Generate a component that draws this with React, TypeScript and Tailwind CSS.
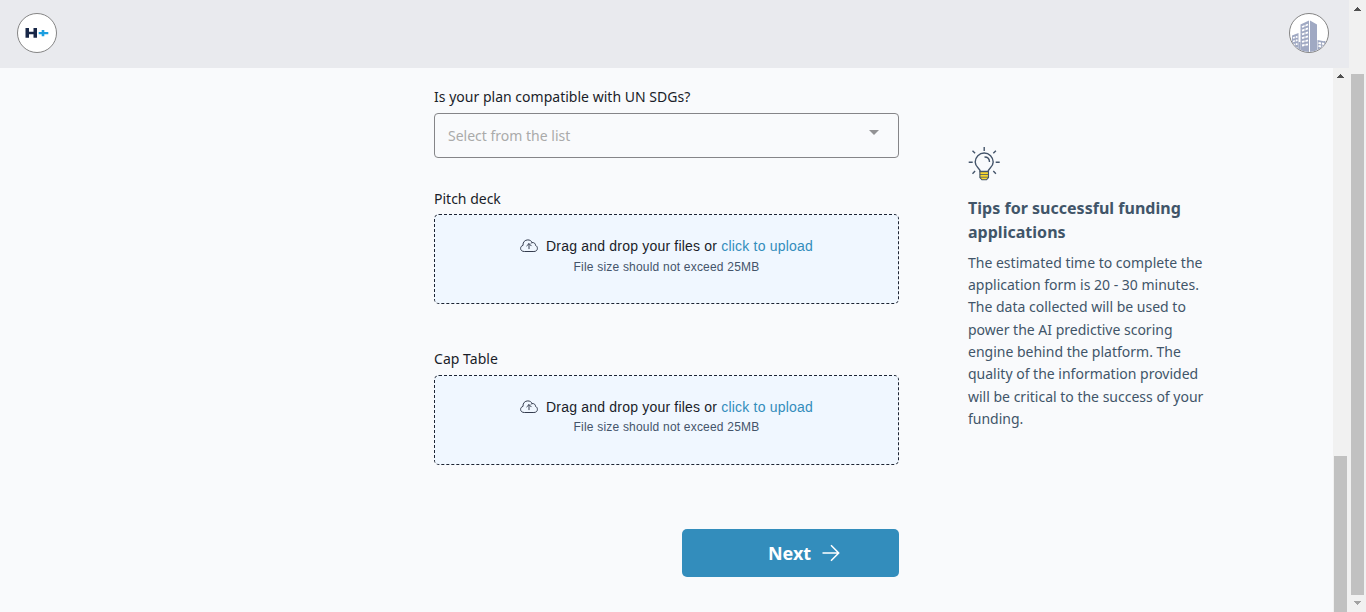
import React from "react";

function CloudIcon() {
  return (
    <svg width="18" height="14" viewBox="0 0 18 14" fill="none" stroke="#343c4e" strokeWidth="1" strokeLinecap="round" strokeLinejoin="round">
      <path d="M4 12.500C2 12.500.6 11.200.6 9.400c0-1.500 1-2.700 2.400-3C2.700 3 5 .9 7.800.9c2 0 3.600 1 4.400 2.700 2-.3 3.300 1 3.400 2.900 1.100.4 1.800 1.500 1.800 2.900 0 1.800-1.300 3.100-3.100 3.100Z" />
      <path d="M11 4.200c.3-.3.7-.5 1.200-.6M9 9.700V4.800M6.800 6.800 9 4.600l2.200 2.200" />
    </svg>
  );
}

function BulbIcon() {
  return (
    <svg width="32" height="34" viewBox="0 0 32 34" fill="none" stroke="#44546a" strokeWidth="1.400">
      <path d="M11.900 24.500h8.600v6l-2 2.300h-4.600l-2-2.300Z" fill="#fbd82b" strokeWidth="1.100" />
      <path d="M11.900 27.500h8.600M11.900 30.200h8.600" strokeWidth=".8" />
      <path d="M12.200 24.500c0-3.300-5-4.100-5-9.500a9 9 0 0 1 18 0c0 5.400-5 6.200-5 9.500Z" fill="#f9fafc" />
      <path d="M16.500 10c3 0 5 2 5 5M16.200 0v4M4.500 3.700l2.600 2.600M27.900 3.700l-2.600 2.600M.7 15.300h4M27.700 15.300h4M4.500 26.700l2.600-2.600M27.900 26.700l-2.600-2.600" />
    </svg>
  );
}

function BuildingIcon() {
  return (
    <svg width="38" height="38" viewBox="0 0 38 38">
      <path d="M2 21.500 8.500 19v19H2ZM10.500 10.500 19 6.500V38h-8.500ZM20 6.500l7 4V38h-7ZM27.500 26l10.500 2v10H27.500Z" fill="#a0a9c3" />
      <path d="M8.500 28h2v10h-2Z" fill="#a0a9c3" />
      <path d="M12 13l6-2.500M12 16.700l6-2.300M12 20.400l6-2.100M12 24.100l6-1.800M12 27.800l6-1.500M12 31.500l6-1.200M3 24l4.500-1.400M3 27.500l4.500-1.300M3 31l4.500-1.200M5 34.500l2.500-.7M28.500 29l9 1.500M28.500 32l8 1.300" stroke="#fff" strokeWidth="1.800" />
      <path d="M15 10v22M5.300 22v12M31.500 27v8M34.500 27v8" stroke="#a0a9c3" strokeWidth=".9" />
    </svg>
  );
}

function Arrow({ down = false }: { down?: boolean }) {
  return (
    <svg width="7" height="4" viewBox="0 0 7 4" shapeRendering="crispEdges">
      <path d={down ? "M0 0h7L3.500 4Z" : "M0 4h7L3.500 0Z"} fill={down ? "#a3a3a3" : "#505050"} />
    </svg>
  );
}

function Dropzone({ noteGap = "" }: { noteGap?: string }) {
  return (
    <div className="flex h-[90px] w-[465px] flex-col items-center rounded-[5px] border border-dashed border-[#1d2433] bg-[#f0f7ff] pt-[21px] font-['Liberation_Sans',Arial,sans-serif] tracking-[0.2px]">
      <div className="flex h-5 items-center gap-2 whitespace-nowrap text-[14px] leading-5 text-[#1a1d29]">
        <CloudIcon />
        <span>
          Drag and drop your files or <span className="text-[#338dbc]">click to upload</span>
        </span>
      </div>
      <div className={`text-[12px] leading-5 text-[#44546a] ${noteGap}`}>File size should not exceed 25MB</div>
    </div>
  );
}

export default function App() {
  return (
    <div className="flex h-[612px] w-[1366px] overflow-hidden bg-[#f9fafc] font-['Noto_Sans',sans-serif]">
      <div className="flex w-[1349px] flex-col">
        <header className="flex h-[68px] shrink-0 items-start justify-between bg-[#e9eaee] pt-[13px] pr-5 pl-[17px]">
          <div className="flex size-10 items-center justify-center rounded-full border border-[#858585] bg-white">
            <svg width="24" height="12" viewBox="0 0 24 12">
              <path d="M.500 1h3.500v3.700h4.500V1h3.500v9.800h-3.500V7.300h-4.500v3.500h-3.500Z" fill="#182747" />
              <path d="M16.700 3h2.600v2h4v2.300h-4v2h-2.600v-2h-3V5h3Z" fill="#1b9ee0" />
            </svg>
          </div>
          <div className="size-10 overflow-hidden rounded-full border border-[#858585] bg-white">
            <BuildingIcon />
          </div>
        </header>
        <div className="flex flex-1">
          <main className="flex w-[1333px] pl-[434px]">
            <form className="w-[465px] pt-[18px] text-[14px] text-[#1a1d29]">
              <div className="h-[27px] leading-[22px] tracking-[0.015px]">Is your plan compatible with UN SDGs?</div>
              <div className="flex h-[45px] items-center justify-between rounded-[4px] border border-[#858588] pr-[19px] pl-[13px] text-[#aaaaaa]">
                <span>Select from the list</span>
                <svg className="mb-[6px]" width="10" height="5" viewBox="0 0 10 5"><path d="M0 0h10L5 5Z" fill="#929294" /></svg>
              </div>
              <div className="mt-[30px] h-[26px] leading-[22px]">Pitch deck</div>
              <Dropzone noteGap="mt-px" />
              <div className="mt-11 h-[27px] leading-[22px] tracking-[0.03px]">Cap Table</div>
              <Dropzone />
              <button type="button" className="mt-16 ml-auto flex h-12 w-[217px] items-center justify-center gap-[11px] rounded-[5px] bg-[#338dbc] pl-[27px] text-[18px] font-bold text-white">
                Next
                <svg width="18" height="18" viewBox="0 0 18 18" fill="none" stroke="white" strokeWidth="1.500"><path d="M.5 9h16M9 1.300 16.700 9 9 16.700" /></svg>
              </button>
            </form>
            <aside className="ml-[69px] w-[250px] pt-[79px] text-[#415569]">
              <BulbIcon />
              <h2 className="mt-[15px] text-[16px] leading-6 font-bold tracking-[0.02px]">Tips for successful funding<br />applications</h2>
              <p className="mt-[7.800px] text-[14px] leading-[22.300px] whitespace-nowrap">
                The estimated time to complete the<br />application form is 20 - 30 minutes.<br />The data collected will be used to<br />power the AI predictive scoring<br />engine behind the platform. The<br />quality of the information provided<br />will be critical to the success of your<br />funding.
              </p>
            </aside>
          </main>
          <div className="flex w-4 flex-col items-start bg-[#f1f1f1] pt-[6px] pl-px">
            <div className="ml-[3px] h-1"><Arrow /></div>
            <div className="mt-[378px] w-[13px] flex-1 bg-[#c1c1c1]" />
          </div>
        </div>
      </div>
      <div className="flex w-[17px] flex-col items-center bg-[#f1f1f1] pt-[7px]">
        <Arrow />
        <div className="mt-[63px] mb-[6px] h-[521px] w-[13px] bg-[#c1c1c1]" />
        <Arrow down />
      </div>
    </div>
  );
}
